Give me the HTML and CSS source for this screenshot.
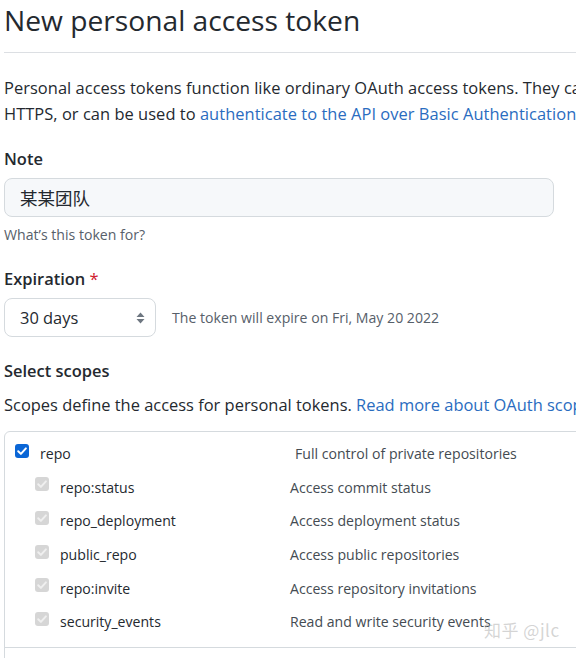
FILE: index.html
```html
<!DOCTYPE html>
<html lang="en">
<head>
<meta charset="utf-8">
<title>New personal access token</title>
<link rel="stylesheet" href="styles.css">
</head>
<body>
<main class="page">
  <h1 class="title">New personal access token</h1>
  <div class="divider"></div>
  <p class="intro">Personal access tokens function like ordinary OAuth access tokens. They can be used instead of a password for Git over<br>HTTPS, or can be used to <a href="#">authenticate to the API over Basic Authentication</a>.</p>

  <label class="label label-note">Note</label>
  <div class="input">某某团队</div>
  <p class="hint">What’s this token for?</p>

  <label class="label label-exp">Expiration <span class="req">*</span></label>
  <div class="expire-row">
    <div class="select">
      <span>30 days</span>
      <svg class="arrows" width="9" height="12" viewBox="0 0 9 12"><path d="M4.5 0.5 L8.5 5 H0.5 Z M4.5 11.5 L8.5 7 H0.5 Z" fill="#6e7781"/></svg>
    </div>
    <span class="expire-note">The token will expire on Fri, May 20 2022</span>
  </div>

  <h3 class="label label-scopes">Select scopes</h3>
  <p class="scopes-desc">Scopes define the access for personal tokens. <a href="#">Read more about OAuth scopes.</a></p>

  <div class="scopes">
    <div class="group">
      <div class="row parent">
        <span class="cb cb-on"><svg width="14" height="14" viewBox="0 0 14 14"><path d="M3.2 7.2 L5.9 9.9 L10.9 4.4" fill="none" stroke="#fff" stroke-width="2" stroke-linecap="round" stroke-linejoin="round"/></svg></span>
        <span class="name">repo</span>
        <span class="desc">Full control of private repositories</span>
      </div>
      <div class="row child">
        <span class="cb cb-dis"><svg width="14" height="14" viewBox="0 0 14 14"><path d="M3.2 7.2 L5.9 9.9 L10.9 4.4" fill="none" stroke="#efefef" stroke-width="2" stroke-linecap="round" stroke-linejoin="round"/></svg></span>
        <span class="name">repo:status</span>
        <span class="desc">Access commit status</span>
      </div>
      <div class="row child">
        <span class="cb cb-dis"><svg width="14" height="14" viewBox="0 0 14 14"><path d="M3.2 7.2 L5.9 9.9 L10.9 4.4" fill="none" stroke="#efefef" stroke-width="2" stroke-linecap="round" stroke-linejoin="round"/></svg></span>
        <span class="name">repo_deployment</span>
        <span class="desc">Access deployment status</span>
      </div>
      <div class="row child">
        <span class="cb cb-dis"><svg width="14" height="14" viewBox="0 0 14 14"><path d="M3.2 7.2 L5.9 9.9 L10.9 4.4" fill="none" stroke="#efefef" stroke-width="2" stroke-linecap="round" stroke-linejoin="round"/></svg></span>
        <span class="name">public_repo</span>
        <span class="desc">Access public repositories</span>
      </div>
      <div class="row child">
        <span class="cb cb-dis"><svg width="14" height="14" viewBox="0 0 14 14"><path d="M3.2 7.2 L5.9 9.9 L10.9 4.4" fill="none" stroke="#efefef" stroke-width="2" stroke-linecap="round" stroke-linejoin="round"/></svg></span>
        <span class="name">repo:invite</span>
        <span class="desc">Access repository invitations</span>
      </div>
      <div class="row child">
        <span class="cb cb-dis"><svg width="14" height="14" viewBox="0 0 14 14"><path d="M3.2 7.2 L5.9 9.9 L10.9 4.4" fill="none" stroke="#efefef" stroke-width="2" stroke-linecap="round" stroke-linejoin="round"/></svg></span>
        <span class="name">security_events</span>
        <span class="desc">Read and write security events</span>
      </div>
    </div>
    <div class="group group-next"></div>
  </div>
</main>
<div class="watermark">知乎 @jlc</div>
</body>
</html>
```

FILE: styles.css
```css
html, body {
  margin: 0;
  padding: 0;
  overflow: hidden;
  background: #ffffff;
}
body {
  width: 576px;
  height: 658px;
  position: relative;
  font-family: "Open Sans", "Noto Sans", "Noto Sans CJK SC", sans-serif;
  color: #24292f;
}
.page {
  display: flex;
  flex-direction: column;
  align-items: flex-start;
  padding-left: 4px;
}
a {
  color: #2a6cc0;
  text-decoration: none;
}
.title {
  margin: 0;
  font-size: 28.2px;
  font-weight: 400;
  line-height: 40px;
  white-space: nowrap;
}
.divider {
  align-self: stretch;
  margin-top: 12px;
  height: 1px;
  background: #dcdfe3;
  margin-right: -10px;
}
.intro {
  margin: 22px 0 0;
  font-size: 16.45px;
  line-height: 26px;
  letter-spacing: 0.04px;
  white-space: nowrap;
}
.label {
  display: block;
  margin: 0;
  font-size: 16.45px;
  font-weight: 600;
  line-height: 24px;
  white-space: nowrap;
}
.label-note { margin-top: 20px; }
.label-exp { margin-top: 22px; }
.label-scopes { margin-top: 22px; }
.req { color: #cf222e; font-weight: 400; }
.input {
  margin-top: 7px;
  box-sizing: border-box;
  width: 550px;
  height: 39px;
  padding: 0 15px;
  display: flex;
  align-items: center;
  background: #f6f8fa;
  border: 1px solid #d5dade;
  border-radius: 8px;
  font-family: "Noto Sans CJK SC", sans-serif;
  font-size: 17.5px;
  color: #24292f;
}
.hint {
  margin: 8px 0 0;
  font-size: 14.1px;
  line-height: 20px;
  color: #57606a;
}
.expire-row {
  margin-top: 7px;
  display: flex;
  align-items: center;
  gap: 16px;
}
.select {
  box-sizing: border-box;
  width: 152px;
  height: 39px;
  padding: 0 10px 0 15px;
  display: flex;
  align-items: center;
  justify-content: space-between;
  border: 1px solid #d5dade;
  border-radius: 8px;
  background: #ffffff;
  font-size: 16.45px;
}
.arrows { display: block; }
.expire-note {
  font-size: 14.1px;
  color: #57606a;
  white-space: nowrap;
}
.scopes-desc {
  margin: 9px 0 0;
  font-size: 16.45px;
  line-height: 26px;
  white-space: nowrap;
}
.scopes {
  margin-top: 13px;
  width: 760px;
  border: 1px solid #d5dade;
  border-radius: 6px;
}
.group {
  padding: 5px 0 8px;
  border-bottom: 1px solid #d5dade;
}
.group-next {
  height: 60px;
  border-bottom: none;
}
.row {
  display: flex;
  align-items: center;
  height: 33.6px;
  font-size: 14.1px;
  white-space: nowrap;
}
.parent { padding-left: 10px; }
.child { padding-left: 30px; }
.cb {
  width: 14px;
  height: 14px;
  border-radius: 3px;
  margin-right: 11px;
  margin-bottom: 6px;
  flex: none;
  display: flex;
}
.cb-on { background: #0a66d6; }
.cb-dis { background: #d6d6d6; }
.name { color: #24292f; }
.parent .name { width: 255px; flex: none; }
.child .name { width: 230px; flex: none; }
.desc { color: #444b52; }
.watermark {
  position: absolute;
  left: 484px;
  top: 619px;
  font-family: "Noto Sans CJK SC", sans-serif;
  font-size: 17px;
  line-height: 22px;
  letter-spacing: 0.5px;
  color: rgba(170, 170, 170, 0.5);
  white-space: nowrap;
}
```
